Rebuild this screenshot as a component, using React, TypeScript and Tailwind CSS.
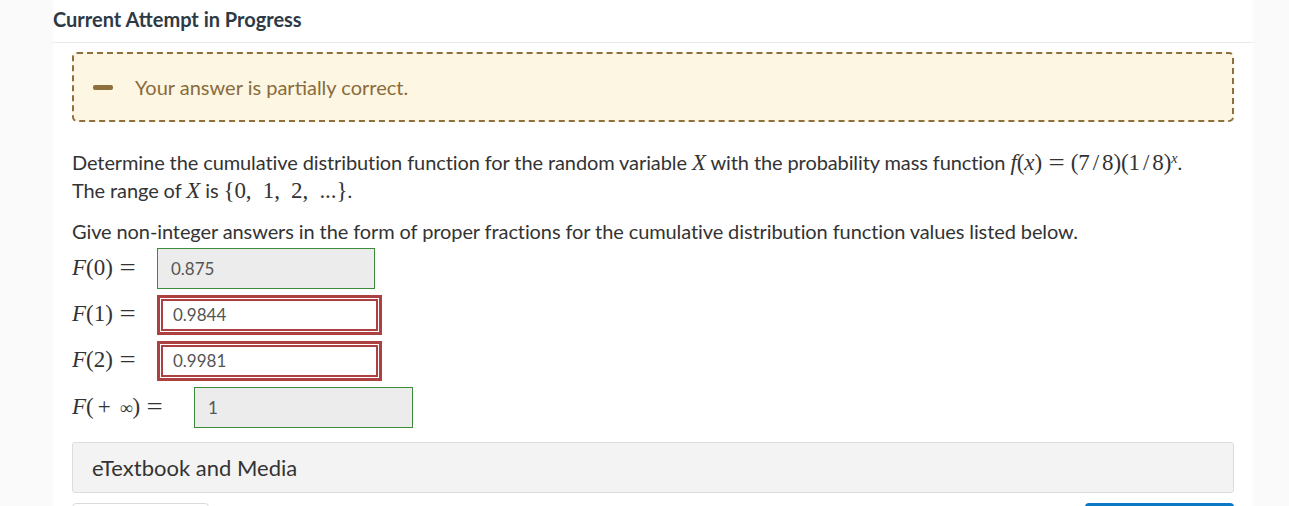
import React from 'react';

const lato = { fontFamily: 'Lato, "Open Sans", sans-serif' };

// math glyphs use a serif face, like MathJax output
const M: React.FC<{ children: React.ReactNode; className?: string }> = ({ children, className = '' }) => (
  <span className={`font-['Liberation_Serif','DejaVu_Serif',serif] text-[23px] leading-[20px] ${className}`}>{children}</span>
);

const Eq = () => <span className="mx-[8px] inline-block scale-x-125">=</span>;
const Sl = () => <span className="mx-[3px]">/</span>;

type Row = { arg: React.ReactNode; value: string; state: 'ok' | 'bad'; labelW: string; inputW: string };

const rows: Row[] = [
  { arg: '0', value: '0.875', state: 'ok', labelW: 'w-[85px]', inputW: 'w-[218px]' },
  { arg: '1', value: '0.9844', state: 'bad', labelW: 'w-[85px]', inputW: 'w-[225px]' },
  { arg: '2', value: '0.9981', state: 'bad', labelW: 'w-[85px]', inputW: 'w-[225px]' },
  { arg: <><span className="mx-[4px]">+</span><span className="ml-[5px] text-[18px]">∞</span></>, value: '1', state: 'ok', labelW: 'w-[122px]', inputW: 'w-[219px]' },
];

export default function App() {
  return (
    <div className="flex h-[506px] w-[1289px] overflow-hidden bg-[#fafafa]" style={lato}>
      <div className="w-[53px] shrink-0" />
      <div className="flex w-[1200px] shrink-0 flex-col overflow-hidden bg-white">
        {/* header */}
        <div className="flex h-[43px] shrink-0 items-center border-b border-[#ebebeb] pb-[4px]">
          <h2 className="text-[20px] font-bold text-[#2d3a45]">Current Attempt in Progress</h2>
        </div>

        <div className="flex shrink-0 flex-col px-[19px]">
          {/* feedback */}
          <div className="mt-[9px] flex h-[70px] shrink-0 items-center rounded-[5px] border-2 border-dashed border-[#8e6f3e] bg-[#fcf6e2] pl-[19px]">
            <span className="h-[5px] w-[20px] rounded-[2px] bg-[#8e6f3e]" />
            <span className="ml-[22px] text-[20px] text-[#8a6b3b]">Your answer is partially correct.</span>
          </div>

          {/* question */}
          <p className="mt-[26px] text-[20px] leading-[28px] tracking-[-0.1px] text-[#333]">
            Determine the cumulative distribution function for the random variable <M className="italic">X</M> with the probability mass function{' '}
            <M><i>f</i>(<i>x</i>)<Eq />(7<Sl />8)(1<Sl />8)<sup className="text-[14px] italic">x</sup></M>.
            <br />
            The range of <M className="italic">X</M> is <M>{'{'}0,&nbsp;&nbsp;1,&nbsp;&nbsp;2,&nbsp;&nbsp;...{'}'}</M>.
          </p>

          <p className="mt-[13px] text-[20px] leading-[28px] tracking-[-0.1px] text-[#333]">
            Give non-integer answers in the form of proper fractions for the cumulative distribution function values listed below.
          </p>

          <div className="mt-[3px] flex flex-col gap-[6px]">
            {rows.map((r, i) => (
              <div key={i} className="flex shrink-0 items-center">
                <div className={`${r.labelW} shrink-0 text-[#333]`}>
                  <M><i>F</i>({r.arg})<Eq /></M>
                </div>
                {r.state === 'ok' ? (
                  <div className={`${r.inputW} flex h-[41px] items-center border border-[#3c8a3a] bg-[#ececec] pl-[13px] text-[17px] text-[#555]`}>
                    {r.value}
                  </div>
                ) : (
                  <div className={`${r.inputW} flex h-[40px] items-center border-[3px] border-[#ad4141] bg-white pl-[13px] text-[17px] text-[#555] shadow-[inset_0_0_0_1px_#ffffff,inset_0_0_0_3px_#ad4141]`}>
                    {r.value}
                  </div>
                )}
              </div>
            ))}
          </div>

          {/* media panel */}
          <div className="mt-[14px] flex h-[51px] shrink-0 items-center rounded-[3px] border border-[#dcdcdc] bg-[#f3f3f3] pl-[19px]">
            <span className="text-[22px] text-[#333]">eTextbook and Media</span>
          </div>

          <div className="mt-[10px] flex shrink-0 justify-between">
            <div className="h-[20px] w-[137px] rounded-t-[4px] border border-[#dcdcdc] bg-white" />
            <div className="h-[20px] w-[149px] rounded-t-[4px] bg-[#0b79c4]" />
          </div>
        </div>
      </div>
    </div>
  );
}
